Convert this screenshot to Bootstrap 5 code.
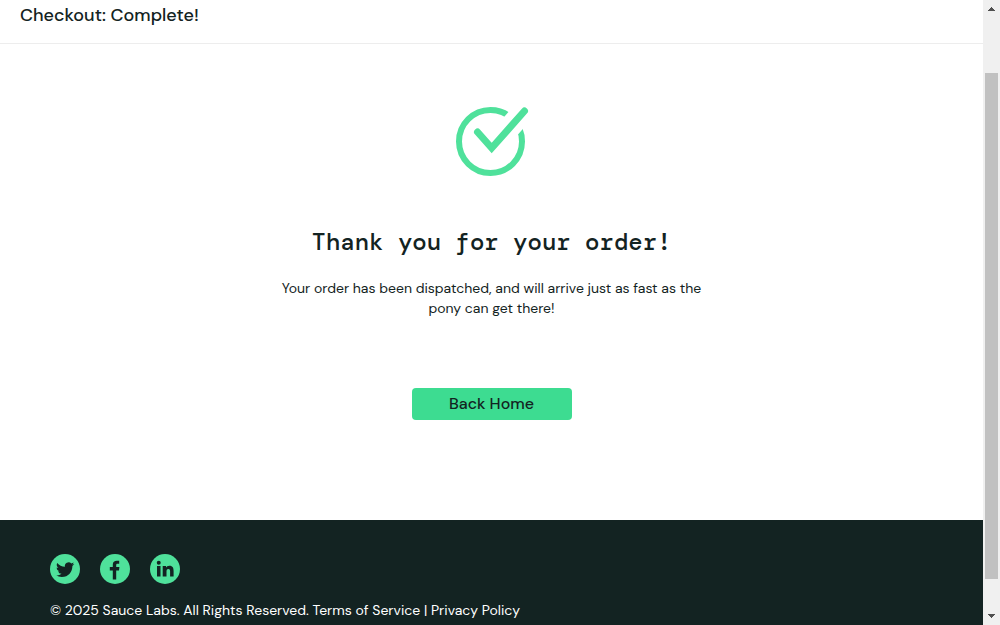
<!DOCTYPE html>
<html lang="en">
<head>
<meta charset="utf-8">
<meta name="viewport" content="width=device-width, initial-scale=1">
<title>Checkout: Complete!</title>
<link href="https://cdn.jsdelivr.net/npm/bootstrap@5.3.0/dist/css/bootstrap.min.css" rel="stylesheet">
<style>
  :root { --ink: #132322; --mint: #3ddc91; --mint-light: #4fe19b; }
  body { font-family: "DM Sans", "Open Sans", sans-serif; font-size: 14px; line-height: 20px; color: var(--ink); }
  .page-title { font-size: 18px; line-height: 30px; font-weight: 500; }
  .title-bar { padding: 0 20px 13px; border-bottom: 1px solid #ededed; }
  .complete { padding: 60px 20px 100px; }
  .complete-mark { width: 76px; height: 76px; }
  .complete-title { margin: 46px 0 20px; font-family: "DM Mono", "Liberation Mono", monospace; font-size: 24px; line-height: 32px; font-weight: 500; }
  .complete-text { max-width: 440px; margin-bottom: 70px; }
  .btn-mint { width: 160px; padding: 4px; border: 0; border-radius: 4px; font-size: 16px; line-height: 24px; font-weight: 500; --bs-btn-bg: var(--mint); --bs-btn-hover-bg: var(--mint-light); --bs-btn-color: var(--ink); }
  .page-footer { background: var(--ink); color: #fff; padding: 34px 50px 0; }
  .social { gap: 20px; margin-bottom: 16px; }
  .social svg { display: block; width: 30px; height: 30px; }
  .scroll-rail { width: 17px; height: 100vh; background: #f0f0f0; color: #505050; padding: 0 2px; }
  .scroll-rail svg { display: block; width: 13px; height: 17px; }
  .rail-space { flex: 56 1 0; }
  .rail-thumb { flex: 506 1 0; background: #c1c1c1; }
  .rail-rest { flex: 29 1 0; }
</style>
</head>
<body>
<div class="d-flex min-vh-100">
  <div class="d-flex flex-column flex-grow-1">
    <header class="title-bar"><h1 class="page-title m-0">Checkout: Complete!</h1></header>
    <main class="complete d-flex flex-column align-items-center text-center">
      <svg class="complete-mark" viewBox="0 0 76 76" fill="none" stroke="#4fe19b" stroke-width="6" role="img" aria-label="Order complete">
        <mask id="gap" maskUnits="userSpaceOnUse" x="0" y="0" width="76" height="76">
          <path fill="#fff" stroke="none" d="M0 0h76v76H0z"/>
          <path stroke="#000" stroke-width="22" d="M38 43.500 76 0"/>
        </mask>
        <circle cx="36.500" cy="37.500" r="31.500" mask="url(#gap)"/>
        <path d="M23.500 28 37.700 44 70.500 7" stroke-width="7" stroke-linecap="round"/>
      </svg>
      <h2 class="complete-title">Thank you for your order!</h2>
      <p class="complete-text">Your order has been dispatched, and will arrive just as fast as the pony can get there!</p>
      <button type="button" class="btn btn-mint">Back Home</button>
    </main>
    <footer class="page-footer flex-grow-1">
      <nav class="social d-flex" aria-label="Social">
        <a href="#twitter" aria-label="Twitter"><svg viewBox="0 0 30 30"><circle cx="15" cy="15" r="15" fill="#4fe19b"/><path fill="#132322" transform="translate(6 6.500) scale(.76)" d="M23.95 4.57a10 10 0 0 1-2.82.78 4.96 4.96 0 0 0 2.16-2.73c-.95.56-2 .96-3.13 1.19a4.92 4.92 0 0 0-8.38 4.48C7.69 8.1 4.07 6.13 1.64 3.16a4.82 4.82 0 0 0-.67 2.48c0 1.71.87 3.21 2.19 4.1a4.9 4.9 0 0 1-2.23-.62v.06a4.92 4.92 0 0 0 3.95 4.83 5 5 0 0 1-2.21.08 4.94 4.94 0 0 0 4.6 3.42A9.87 9.87 0 0 1 0 19.54a14 14 0 0 0 7.55 2.21c9.05 0 14-7.5 14-13.98 0-.21 0-.42-.02-.63a9.94 9.94 0 0 0 2.42-2.57z"/></svg></a>
        <a href="#facebook" aria-label="Facebook"><svg viewBox="0 0 30 30"><circle cx="15" cy="15" r="15" fill="#4fe19b"/><path fill="#132322" d="M12.800 25.500v-9H9.800V13h3v-2.600C12.800 8 14.400 6.700 16.800 6.700c1.100 0 2.100.1 2.400.1v3h-1.700c-1.100 0-1.300.6-1.300 1.500V13h3.200l-.4 3.500h-2.800v9z"/></svg></a>
        <a href="#linkedin" aria-label="LinkedIn"><svg viewBox="0 0 30 30"><circle cx="15" cy="15" r="15" fill="#4fe19b"/><path fill="#132322" d="M7 12h3.500v10.500H7zM8.750 6.800a2 2 0 1 1 0 4 2 2 0 0 1 0-4zM12.700 12H16v1.500c.5-.9 1.600-1.800 3.400-1.800 3.500 0 4.200 2.300 4.200 5.300v5.500h-3.500v-4.900c0-1.200 0-2.700-1.700-2.700s-1.900 1.300-1.900 2.600v5h-3.800z"/></svg></a>
      </nav>
      <p class="m-0">© 2025 Sauce Labs. All Rights Reserved. Terms of Service | Privacy Policy</p>
    </footer>
  </div>
  <div class="scroll-rail d-flex flex-column flex-shrink-0 sticky-top" aria-hidden="true">
    <svg viewBox="0 0 13 17" shape-rendering="crispEdges"><path fill="currentColor" d="M3 11h7v-1h-1v-1h-1v-1h-1v-1h-1v1h-1v1h-1v1h-1z"/></svg>
    <div class="rail-space"></div><div class="rail-thumb"></div><div class="rail-rest"></div>
    <svg viewBox="0 0 13 17" shape-rendering="crispEdges"><path fill="currentColor" d="M3 6h7v1h-1v1h-1v1h-1v1h-1v-1h-1v-1h-1v-1h-1z"/></svg>
  </div>
</div>
<script src="https://cdn.jsdelivr.net/npm/bootstrap@5.3.0/dist/js/bootstrap.bundle.min.js"></script>
</body>
</html>
